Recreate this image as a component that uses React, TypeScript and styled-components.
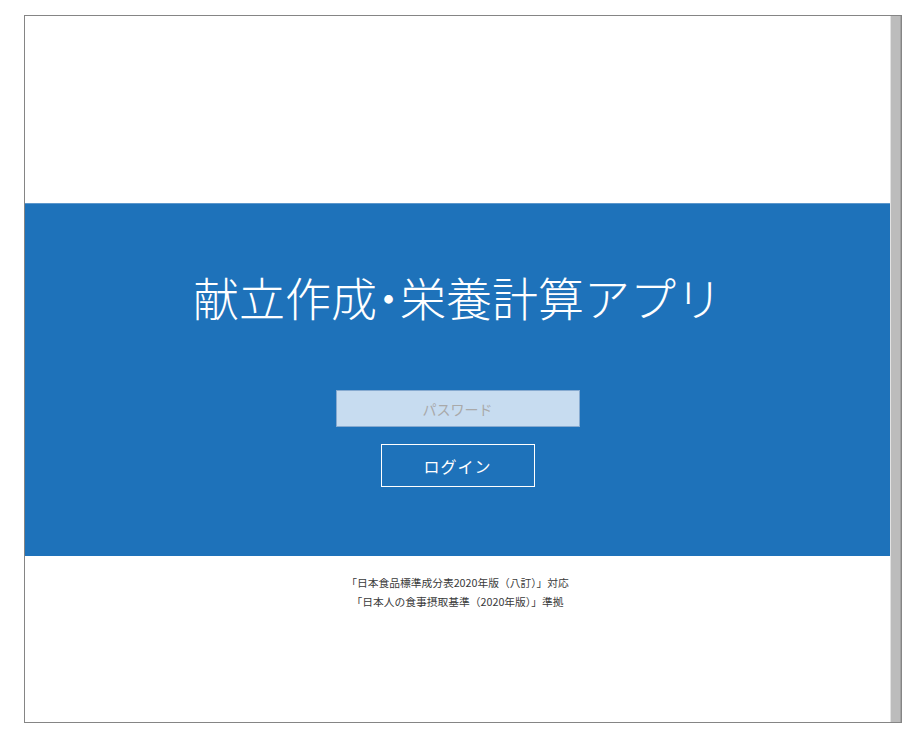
import React from "react";
import styled, { createGlobalStyle } from "styled-components";

const Global = createGlobalStyle`
  html, body { margin: 0; padding: 0; background: #ffffff; }
  body { font-family: "Noto Sans CJK JP", "Noto Sans", sans-serif; }
  * { box-sizing: border-box; }
`;

const Frame = styled.div`
  margin: 15px 0 0 24px;
  width: 878px;
  height: 708px;
  border: 1px solid #858585;
  display: flex;
  flex-direction: row;
`;

const Content = styled.div`
  flex: 1;
  display: flex;
  flex-direction: column;
  background: #ffffff;
`;

const Scrollbar = styled.div`
  width: 11px;
  background: #bcbcbc;
  border-left: 1px solid #e2e2e2;
  border-right: 1px solid #a4a4a4;
`;

const TopSpace = styled.div`
  height: 187px;
`;

const Band = styled.section`
  height: 353px;
  background: #1e72ba;
  border-top: 1px solid #5c97cc;
  display: flex;
  flex-direction: column;
  align-items: center;
  padding-top: 62px;
`;

const Title = styled.h1`
  margin: 0;
  height: 60px;
  line-height: 60px;
  font-size: 46px;
  font-weight: 300;
  letter-spacing: 0;
  color: #ffffff;
  font-family: "Noto Sans CJK JP", sans-serif;
  white-space: nowrap;
`;

const Dot = styled.span`
  font-feature-settings: "halt";
`;

const PasswordInput = styled.input`
  margin-top: 64px;
  width: 244px;
  height: 37px;
  background: #c7dcf0;
  border: 1px solid #86aad0;
  text-align: center;
  font-size: 14px;
  font-family: "Noto Sans CJK JP", sans-serif;
  color: #555;
  outline: none;
  &::placeholder { color: #a9a9a9; }
`;

const LoginButton = styled.button`
  margin-top: 17px;
  width: 154px;
  height: 43px;
  background: transparent;
  border: 1px solid #ffffff;
  color: #ffffff;
  font-size: 16px;
  font-weight: 400;
  font-family: "Noto Sans CJK JP", sans-serif;
  letter-spacing: 1px;
  cursor: pointer;
`;

const Footer = styled.div`
  padding-top: 17px;
  display: flex;
  flex-direction: column;
  align-items: center;
`;

const FooterLine = styled.p`
  margin: 0;
  font-size: 10.75px;
  line-height: 19px;
  color: #3a3a3a;
  font-family: "Noto Sans CJK JP", sans-serif;
`;

export default function App() {
  return (
    <>
      <Global />
      <Frame>
        <Content>
          <TopSpace />
          <Band>
            <Title>
              献立作成<Dot>・</Dot>栄養計算アプリ
            </Title>
            <PasswordInput type="password" placeholder="パスワード" />
            <LoginButton>ログイン</LoginButton>
          </Band>
          <Footer>
            <FooterLine>「日本食品標準成分表2020年版（八訂）」対応</FooterLine>
            <FooterLine>「日本人の食事摂取基準（2020年版）」準拠</FooterLine>
          </Footer>
        </Content>
        <Scrollbar />
      </Frame>
    </>
  );
}
